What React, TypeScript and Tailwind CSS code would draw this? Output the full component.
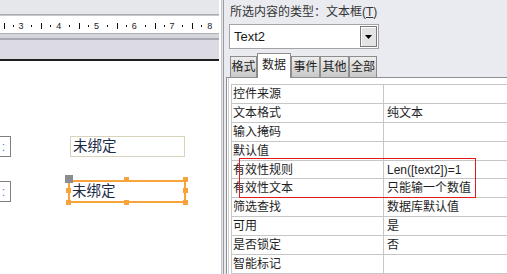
import React from "react";

function Ruler() {
  const lines: number[] = [];
  const dots: number[] = [];
  const nums: { x: number; n: number }[] = [];
  for (let k = -1; k < 7; k++) {
    const L = 3.5 + 37.75 * k;
    lines.push(L);
    dots.push(L + 9.2, L + 27.8);
    if (k >= 0) nums.push({ x: L + 17.5, n: k + 3 });
  }
  return (
    <div className="h-[17px] bg-white">
      <svg width="219" height="17" className="block">
        {lines.map((x, i) => (
          <rect key={"l" + i} x={Math.round(x)} y={7} width={1} height={6} fill="#111" />
        ))}
        {dots.map((x, i) => (
          <rect key={"d" + i} x={Math.round(x)} y={9} width={1} height={2} fill="#111" />
        ))}
        {nums.map((o, i) => (
          <text
            key={"n" + i}
            x={o.x}
            y={13}
            fontSize={9}
            textAnchor="middle"
            fill="#1a1a1a"
            fontFamily="Liberation Sans, sans-serif"
          >
            {o.n}
          </text>
        ))}
      </svg>
    </div>
  );
}

const rows: [string, string, number][] = [
  ["控件来源", "", 19],
  ["文本格式", "纯文本", 19],
  ["输入掩码", "", 19],
  ["默认值", "", 19],
  ["有效性规则", "Len([text2])=1", 18],
  ["有效性文本", "只能输一个数值", 19],
  ["筛选查找", "数据库默认值", 19],
  ["可用", "是", 19],
  ["是否锁定", "否", 19],
  ["智能标记", "", 19],
];

function Handle({ cls }: { cls: string }) {
  return <div className={"absolute h-[5px] w-[5px] bg-[#f7a23a] " + cls} />;
}

export default function App() {
  return (
    <div className="relative flex h-[274px] w-[507px] overflow-hidden bg-white font-['Liberation_Sans','Noto_Sans_CJK_SC',sans-serif] text-[#1e1e1e]">
      {/* Left design pane */}
      <div className="flex w-[219px] shrink-0 flex-col">
        <div className="h-[14px] bg-[#e6e7eb]" />
        <div className="h-px bg-[#a9a9b1]" />
        <div className="h-px bg-[#c8c8ce]" />
        <Ruler />
        <div className="h-px bg-[#b0b0b8]" />
        <div className="h-[4px] bg-[#d5d5dc]" />
        <div className="h-[2px] bg-[#a8a8b2]" />
        <div className="h-[19px] bg-[#dcdbe4]" />
        <div className="h-[2px] bg-[#1e1e1e]" />
        <div className="relative flex-1 bg-white">
          {/* label boxes cut at left edge */}
          <div className="absolute left-[-30px] top-[75px] flex h-[21px] w-[41px] items-center justify-end border border-[#7f7f7f] pr-[5px] text-[12px] leading-[14px] text-[#4d86d6]">
            :
          </div>
          <div className="absolute left-[-30px] top-[120px] flex h-[21px] w-[41px] items-center justify-end border border-[#7f7f7f] pr-[5px] text-[12px] leading-[14px] text-[#4d86d6]">
            :
          </div>
          {/* unbound text box */}
          <div className="absolute left-[70px] top-[75px] flex h-[21px] w-[115px] items-center border border-[#d8d4bc] pl-[2px] text-[14.5px] leading-[17px] text-[#1b2a46]">
            未绑定
          </div>
          {/* selected text box */}
          <div className="absolute left-[68px] top-[119px] flex h-[23px] w-[118px] items-center border-2 border-[#f7a53b] pl-[2px] text-[14.5px] leading-[17px] text-[#1b2a46]">
            未绑定
          </div>
          <Handle cls="left-[124px] top-[116px]" />
          <Handle cls="left-[183px] top-[116px]" />
          <Handle cls="left-[66px] top-[127px]" />
          <Handle cls="left-[183px] top-[127px]" />
          <Handle cls="left-[66px] top-[139px]" />
          <Handle cls="left-[124px] top-[139px]" />
          <Handle cls="left-[183px] top-[139px]" />
          <div className="absolute left-[65px] top-[114px] h-[8px] w-[8px] bg-[#8b8d92]" />
        </div>
      </div>

      {/* Splitter */}
      <div className="flex w-[5px] shrink-0">
        <div className="w-[2px] bg-white" />
        <div className="w-px bg-[#c4c5ca]" />
        <div className="w-px bg-[#e4e5e9]" />
        <div className="w-px bg-[#9a9ba0]" />
      </div>

      {/* Property sheet */}
      <div className="flex flex-1 flex-col bg-[#e9ebf0]">
        <div className="h-[24px] pl-[6px] pt-[5px] text-[12px] leading-[14px] text-[#333]">
          所选内容的类型：文本框(<span className="underline">T</span>)
        </div>
        <div className="ml-[5px] mt-[2px] flex h-[27px] w-[150px] border border-[#a3a3a3] bg-white p-px">
          <div className="flex flex-1 items-center pl-[3px] text-[13px] leading-[16px] text-[#1a1a1a]">Text2</div>
          <div className="flex w-[17px] items-center justify-center border border-[#7a7a7a] bg-[#e4e4e4] shadow-[inset_1px_1px_0_#ffffff]">
            <svg width="7" height="4" className="block">
              <path d="M0 0h7L3.5 4z" fill="#000" />
            </svg>
          </div>
        </div>
        <div className="relative z-10 mt-[4px] flex h-[24px] items-end pl-[6px] text-[12px] leading-[14px]">
          <div className="flex h-[21px] w-[27px] items-center justify-center border border-b-0 border-[#8d8d8d] bg-linear-to-b from-[#eeeeee] to-[#c8c8c8]">格式</div>
          <div className="-mb-px flex h-[25px] w-[34px] items-center justify-center border border-b-0 border-[#8d8d8d] bg-white pb-[2px]">数据</div>
          <div className="flex h-[21px] w-[29px] items-center justify-center border border-b-0 border-[#8d8d8d] bg-linear-to-b from-[#eeeeee] to-[#c8c8c8]">事件</div>
          <div className="flex h-[21px] w-[29px] items-center justify-center border border-b-0 border-[#8d8d8d] bg-linear-to-b from-[#eeeeee] to-[#c8c8c8]">其他</div>
          <div className="flex h-[21px] w-[28px] items-center justify-center border border-b-0 border-[#8d8d8d] bg-linear-to-b from-[#eeeeee] to-[#c8c8c8]">全部</div>
        </div>
        <div className="ml-[2px] flex flex-1 border-l border-t border-[#8f8f8f] bg-white">
          <div className="w-px" />
          <div className="w-px bg-[#cfcfcf]" />
          <div className="w-[2px]" />
          <div className="flex flex-1 flex-col pt-[6px]">
            <div className="flex flex-1 flex-col border-l border-t border-[#c6c6c6]">
              {rows.map(([k, v, h], i) => (
                <div
                  key={i}
                  className={
                    "flex shrink-0 border-b border-[#c6c6c6] text-[12px] leading-[14px] " +
                    (h === 18 ? "h-[18px]" : "h-[19px]")
                  }
                >
                  <div className="flex w-[152px] items-center border-r border-[#c6c6c6] pl-px">{k}</div>
                  <div className="flex flex-1 items-center pl-[3px]">{v}</div>
                </div>
              ))}
            </div>
          </div>
        </div>
      </div>

      {/* red annotation */}
      <div className="pointer-events-none absolute left-[239px] top-[158px] h-[40px] w-[237px] border border-[#e01b1b]" />
    </div>
  );
}
